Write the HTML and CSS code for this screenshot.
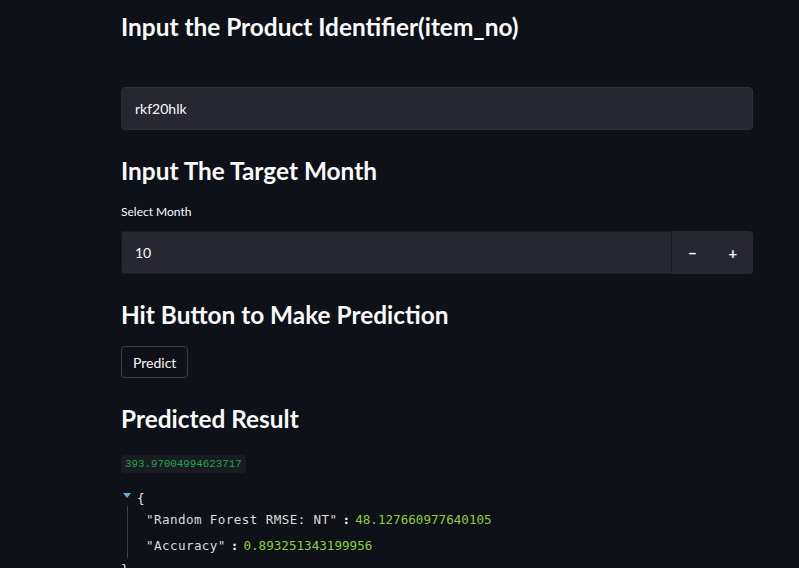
FILE: index.html
```html
<!DOCTYPE html>
<html>
<head>
<meta charset="utf-8">
<link rel="stylesheet" href="styles.css">
</head>
<body>
<main class="main">
  <h3 class="heading first">Input the Product Identifier(item_no)</h3>
  <div class="text-input">rkf20hlk</div>

  <h3 class="heading">Input The Target Month</h3>
  <div class="label">Select Month</div>
  <div class="number-input">
    <div class="number-field">10</div>
    <div class="step-buttons">
      <span class="step">&minus;</span>
      <span class="step">+</span>
    </div>
  </div>

  <h3 class="heading">Hit Button to Make Prediction</h3>
  <button class="btn">Predict</button>

  <h3 class="heading">Predicted Result</h3>
  <code class="code">393.97004994623717</code>

  <div class="json">
    <div class="json-open"><span class="caret"></span><span class="brace">{</span></div>
    <div class="json-body">
      <div class="json-row"><span class="key">"Random Forest RMSE: NT"</span><span class="colon">:</span><span class="val">48.127660977640105</span></div>
      <div class="json-row"><span class="key">"Accuracy"</span><span class="colon">:</span><span class="val">0.893251343199956</span></div>
    </div>
    <div class="json-close">}</div>
  </div>
</main>
</body>
</html>
```

FILE: styles.css
```css
html, body {
  margin: 0;
  padding: 0;
  background: #0e1117;
  color: #fafafa;
  font-family: "Lato", "Noto Sans", sans-serif;
  overflow: hidden;
  height: 568px;
}

.main {
  width: 632px;
  padding-left: 121px;
  display: flex;
  flex-direction: column;
  align-items: flex-start;
}

.heading {
  margin: 23px 0 0 0;
  font-size: 24.4px;
  font-weight: 700;
  line-height: 36px;
  height: 36px;
}

.heading.first {
  margin-top: 9px;
}

.text-input {
  margin-top: 42px;
  box-sizing: border-box;
  width: 632px;
  height: 43px;
  background: #262730;
  border: 1px solid #2c2e37;
  border-radius: 4px;
  padding: 0 13px;
  display: flex;
  align-items: center;
  font-size: 14px;
}

.label {
  margin-top: 14px;
  font-size: 12px;
  line-height: 18px;
  height: 18px;
}

.number-input {
  margin-top: 10px;
  width: 632px;
  height: 43px;
  display: flex;
  background: #262730;
  border-radius: 4px;
}

.number-field {
  box-sizing: border-box;
  flex: 1;
  height: 43px;
  border: 1px solid #1a1c22;
  border-radius: 4px 0 0 4px;
  padding: 0 13px;
  display: flex;
  align-items: center;
  font-size: 14px;
}

.step-buttons {
  width: 81px;
  display: flex;
}

.step {
  flex: 1;
  display: flex;
  align-items: center;
  justify-content: center;
  font-size: 15px;
  font-weight: 700;
}

.btn {
  margin-top: 13px;
  height: 32px;
  padding: 0 11px;
  background: #0e1117;
  color: #fafafa;
  border: 1px solid #3b3d45;
  border-radius: 4px;
  font-family: "Lato", "Noto Sans", sans-serif;
  font-size: 14px;
}

.code {
  margin-top: 18px;
  height: 18px;
  padding: 0 4px;
  background: #1a1c23;
  border-radius: 3px;
  color: #1fa64a;
  font-family: "Liberation Mono", monospace;
  font-size: 10.8px;
  line-height: 18px;
}

.json {
  margin-top: 14px;
  font-family: "DejaVu Sans Mono", monospace;
  font-size: 12.6px;
}

.json-open {
  height: 22px;
  display: flex;
  align-items: center;
}

.caret {
  width: 0;
  height: 0;
  border-left: 4px solid transparent;
  border-right: 4px solid transparent;
  border-top: 5px solid #57b7d6;
  margin-left: 2px;
  margin-right: 6px;
  margin-top: -6px;
}

.brace {
  color: #e6e6e6;
}

.json-body {
  margin-top: -3px;
  margin-left: 6px;
  border-left: 1px solid #3c3e46;
  padding-left: 18px;
}

.json-row {
  height: 26px;
  display: flex;
  align-items: center;
}

.key {
  color: #dcdcdc;
  letter-spacing: 0.4px;
}

.colon {
  color: #fafafa;
  margin: 0 5px;
  font-weight: 700;
}

.val {
  color: #8ccf3c;
}

.json-close {
  color: #e6e6e6;
  height: 22px;
  display: flex;
  align-items: center;
}
```
